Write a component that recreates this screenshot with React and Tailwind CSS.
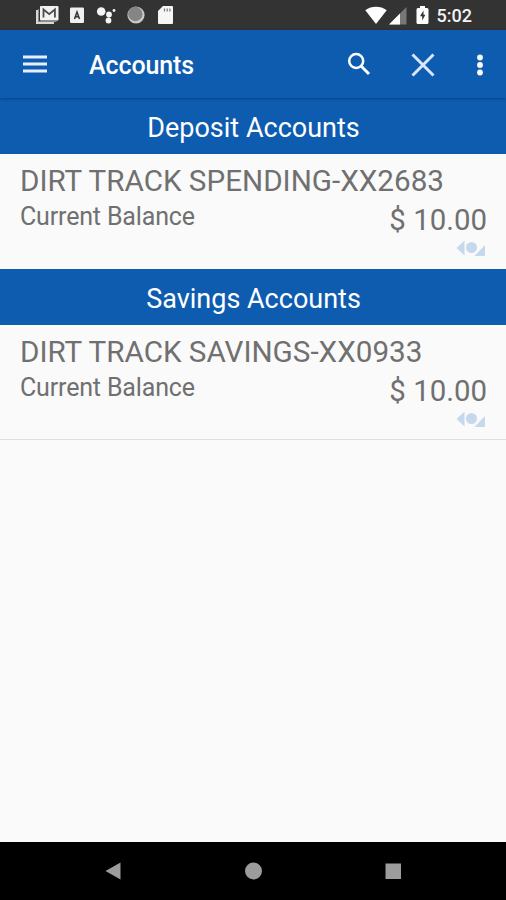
const sections = [
  { title: "Deposit Accounts", name: "DIRT TRACK SPENDING-XX2683", balance: "$ 10.00" },
  { title: "Savings Accounts", name: "DIRT TRACK SAVINGS-XX0933", balance: "$ 10.00" },
];

function StatusBar() {
  return (
    <div className="flex h-[30px] shrink-0 items-center justify-between bg-[#333333] pr-[34px] pl-[36px] text-[#f4f4f4]">
      <div className="flex items-center">
        <svg width="23" height="20" viewBox="0 0 23 20">
          <path d="M1 5v13h17" fill="none" stroke="#d8d8d8" strokeWidth="2" />
          <path d="M2.500 4v12.500h18" fill="none" stroke="#8c8c8c" strokeWidth="1" />
          <rect x="4" y="1" width="18.500" height="14.500" rx="1" fill="#f2f2f2" />
          <path d="M7.500 12.500V4.500l5.700 4.700 5.700-4.700v8" fill="none" stroke="#4b4b4b" strokeWidth="1.800" />
        </svg>
        <svg className="ml-[10px]" width="16" height="18" viewBox="0 0 16 18">
          <rect x="1" y="1.500" width="14" height="15.500" rx="1.200" fill="#f0f0f0" />
          <path d="M5.500 13 8 6l2.500 7M6.500 10.800h3" fill="none" stroke="#333333" strokeWidth="1.500" />
        </svg>
        <svg className="ml-[11px]" width="21" height="20" viewBox="0 0 21 20" fill="#f6f6f6">
          <circle cx="5.200" cy="6.500" r="4.300" />
          <circle cx="13" cy="9.500" r="2.900" />
          <circle cx="12.500" cy="15.500" r="2.900" />
          <circle cx="18" cy="5.500" r="1.400" />
        </svg>
        <svg className="ml-[9px]" width="20" height="20" viewBox="0 0 20 20">
          <circle cx="10" cy="10" r="8.600" fill="#c9c9c9" />
          <circle cx="9.300" cy="9" r="7.200" fill="#858585" />
        </svg>
        <svg className="ml-[11px]" width="17" height="20" viewBox="0 0 17 20">
          <path d="M6 1h9q1 0 1 1v16q0 1-1 1H2q-1 0-1-1V6z" fill="#f6f6f6" />
          <path d="M7.500 3.500v3M10.200 3.500v3M12.900 3.500v3" stroke="#777777" strokeWidth="1.200" />
        </svg>
      </div>
      <div className="flex items-center">
        <svg width="22" height="19" viewBox="0 0 22 19">
          <path d="M0.300 4.300C6.500-.3 15.500-.3 21.700 4.300L11 18z" fill="#ffffff" />
        </svg>
        <svg className="mt-px ml-[2px]" width="18" height="18" viewBox="0 0 18 18">
          <path d="M17.500 0v17.500H0z" fill="#777777" />
          <path d="M11 6.500v11H0z" fill="#ffffff" />
        </svg>
        <svg className="ml-[9px]" width="13" height="20" viewBox="0 0 13 20">
          <path d="M4 1h5v2h2q1.500 0 1.500 1.500v13Q12.500 19 11 19H2Q.5 19 .5 17.500v-13Q.5 3 2 3h2z" fill="#ffffff" />
          <path d="M7.500 5.500 4 11.200H6.200V15.500l3.200-5.700H7.500z" fill="#333333" />
        </svg>
        <span className="ml-[8px] pt-[2px] text-[18px] leading-none font-medium">5:02</span>
      </div>
    </div>
  );
}

function AppBar() {
  return (
    <header className="relative z-10 flex h-[68px] shrink-0 items-center bg-[#0e5cb0] pl-[23px] text-white shadow-[0_1px_3px_rgba(0,0,0,0.3)]">
      <svg width="24" height="20" viewBox="0 0 24 20" className="shrink-0">
        <path d="M0 3h24M0 10h24M0 17h24" stroke="#e6eeff" strokeWidth="3" />
      </svg>
      <h1 className="ml-[42px] pt-[3px] text-[25px] leading-none font-medium tracking-[-0.1px]">Accounts</h1>
      <svg className="ml-auto" width="24" height="24" viewBox="0 0 24 24" fill="none" stroke="#ffffff">
        <circle cx="9.200" cy="9" r="7" strokeWidth="2.500" />
        <path d="m14 14 8 8" strokeWidth="3" />
      </svg>
      <svg className="mt-px ml-[40px]" width="24" height="24" viewBox="0 0 24 24">
        <path d="m1.500 1.500 21 21M22.500 1.500l-21 21" stroke="#d8e6ff" strokeWidth="3" />
      </svg>
      <svg className="mt-px mr-[22px] ml-[41px]" width="8" height="24" viewBox="0 0 8 24" fill="#ffffff">
        <circle cx="4" cy="4.500" r="2.900" />
        <circle cx="4" cy="12" r="2.900" />
        <circle cx="4" cy="19.500" r="2.900" />
      </svg>
    </header>
  );
}

function AccountSection({ title, name, balance }) {
  return (
    <section className="border-[#dedede] last:border-b">
      <h2 className="flex h-[56px] items-center justify-center bg-[#0e5cb0] pt-[5px] pl-px text-[27px] leading-none text-white">
        {title}
      </h2>
      <div className="h-[114.500px] pt-[11px] pr-[19px] pl-[20px] text-[#707070]">
        <div className="text-[29.650px] leading-[32px] whitespace-nowrap">{name}</div>
        <div className="flex justify-between">
          <span className="pt-[6px] text-[25px] leading-[28px] tracking-[-0.16px]">Current Balance</span>
          <span className="pt-[7px] text-[29.400px] leading-[32px]">{balance}</span>
        </div>
        <svg className="mt-[4px] mr-[1px] ml-auto" width="30" height="17" viewBox="0 0 30 17" fill="#c5d8ec">
          <path d="M8.500 .500v15L.500 8z" />
          <circle cx="15.500" cy="7.500" r="5.500" />
          <path d="M29 5V16H18.500z" />
        </svg>
      </div>
    </section>
  );
}

function NavBar() {
  return (
    <nav className="flex h-[58px] shrink-0 items-center justify-between bg-black px-[104px] text-[#9c9c9c]">
      <svg width="18" height="18" viewBox="0 0 18 18" fill="currentColor">
        <path d="M16.500.500v17L1.500 9z" />
      </svg>
      <svg width="18" height="18" viewBox="0 0 18 18" fill="currentColor">
        <circle cx="9.500" cy="9" r="8.500" />
      </svg>
      <svg width="18" height="18" viewBox="0 0 18 18" fill="currentColor">
        <rect x="1.500" y="1.500" width="15.500" height="15.500" />
      </svg>
    </nav>
  );
}

export default function App() {
  return (
    <div className="flex h-[900px] w-[506px] flex-col overflow-hidden bg-[#fafafa] font-[Roboto,sans-serif]">
      <StatusBar />
      <AppBar />
      <main className="flex-1 pt-[0.400px]">
        {sections.map((section) => (
          <AccountSection key={section.title} {...section} />
        ))}
      </main>
      <NavBar />
    </div>
  );
}
